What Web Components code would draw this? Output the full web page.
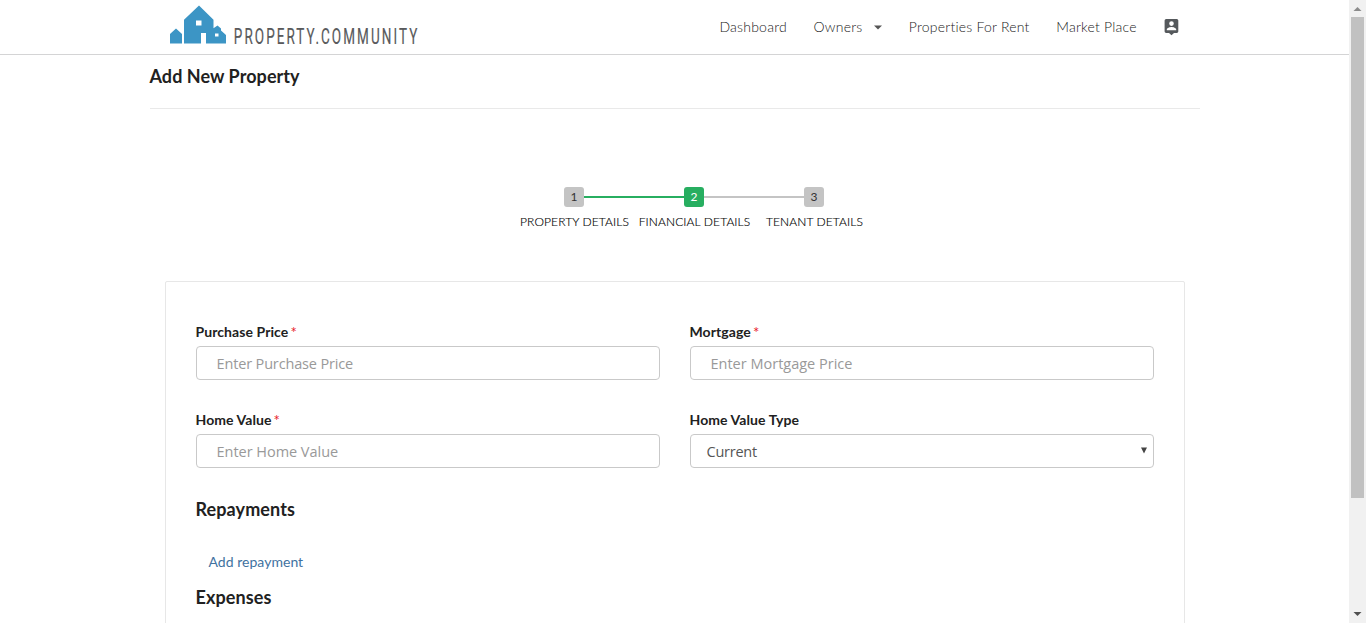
<!DOCTYPE html>
<html lang="en">
<head>
<meta charset="utf-8">
<title>Add New Property</title>
<style>
html,body{margin:0;height:100%;overflow:hidden;background:#fff}
body{font-family:Lato,sans-serif;font-size:14px;color:#212121}
</style>
</head>
<body>
<app-shell>
  <site-header slot="header">
    <nav-item>Dashboard</nav-item>
    <nav-item caret>Owners</nav-item>
    <nav-item>Properties For Rent</nav-item>
    <nav-item>Market Place</nav-item>
  </site-header>
  <page-title>Add New Property</page-title>
  <step-bar>
    <step-item number="1" line="#27ae60">PROPERTY DETAILS</step-item>
    <step-item number="2" line="#c4c4c4" active>FINANCIAL DETAILS</step-item>
    <step-item number="3">TENANT DETAILS</step-item>
  </step-bar>
  <form-panel>
    <form-grid>
      <text-field label="Purchase Price" required hint="Enter Purchase Price" style="--track:-.15px"></text-field>
      <text-field label="Mortgage" required hint="Enter Mortgage Price"></text-field>
      <text-field label="Home Value" required hint="Enter Home Value" style="--track:-.03px"></text-field>
      <select-field label="Home Value Type" value="Current" style="--track:-.25px"></select-field>
    </form-grid>
    <form-section heading="Repayments"><add-link>Add repayment</add-link></form-section>
    <form-section heading="Expenses"></form-section>
  </form-panel>
</app-shell>
<script>
const define = (name, render) => customElements.define(name, class extends HTMLElement {
  connectedCallback() {
    if (this.shadowRoot) return;
    this.attachShadow({mode: 'open'}).innerHTML = render(this);
  }
});
const attr = (el, n) => el.getAttribute(n) || '';

define('app-shell', () => `
<style>
:host{display:grid;grid-template-columns:minmax(0,1fr) 17px;height:100vh;overflow:hidden}
.page{overflow:hidden;min-width:0;height:100vh}
main{width:1050px;margin:0 auto}
</style>
<div class="page"><slot name="header"></slot><main><slot></slot></main></div>
<scroll-rail></scroll-rail>`);

define('scroll-rail', () => `
<style>
:host{display:flex;flex-direction:column;background:#f1f1f1;align-items:center}
svg{display:block;width:17px;height:17px;flex:none}
.thumb{width:13px;height:481px;background:#c1c1c1}
.rest{flex:1}
</style>
<svg viewBox="0 0 17 17"><path d="M4.5 11h8l-4-4z" fill="#8b8b8b"/></svg>
<div class="thumb"></div><div class="rest"></div>
<svg viewBox="0 0 17 17"><path d="M4.5 6h8l-4 4z" fill="#505050"/></svg>`);

define('site-header', () => `
<style>
:host{display:flex;height:54px;border-bottom:1px solid #d4d4d5;padding:0 170.500px 0 169px;justify-content:space-between;align-items:center}
nav{display:flex;align-items:center;height:54px}
</style>
<brand-logo></brand-logo>
<nav><slot></slot><account-icon></account-icon></nav>`);

define('brand-logo', () => `
<style>
:host{display:block;height:54px}
svg{display:block}
text{font-family:Roboto,sans-serif;font-weight:400;font-size:22.5px;fill:#58595b;stroke:#58595b;stroke-width:.2px}
</style>
<svg width="252" height="54" viewBox="0 0 252 54">
<path fill="#3c95c5" fill-rule="evenodd" d="M1 43.5V34l6-5.5 6 5.5v9.5zM15 43.5V19.800L30 5.500l14.500 14.300v8.500l4-2.800 3.500 3v2l5 4.500v8.500H37V33h-5v10.500zM27 20.500v5h5.500v-5zM46 33.500v3h3.500v-3z"/>
<text transform="translate(64.800 43.600) scale(.6 1)" textLength="306" lengthAdjust="spacing">PROPERTY.COMMUNITY</text>
</svg>`);

define('nav-item', el => `
<style>
:host{display:flex;align-items:center;margin-right:26.700px;font-size:14px;line-height:20px;font-weight:300;color:#222;white-space:nowrap;letter-spacing:.22px}
svg{margin-left:11.600px;display:block}
</style>
<span><slot></slot></span>${el.hasAttribute('caret') ? '<svg width="8" height="5" viewBox="0 0 8 5"><path d="M0 .5h8L4 4.500z" fill="#555"/></svg>' : ''}`);

define('account-icon', () => `
<style>:host{display:block;width:15px;height:54px}svg{display:block;margin-top:18px}</style>
<svg width="16" height="18" viewBox="0 0 16 18"><path fill="#55595c" fill-rule="evenodd" d="M2.200 1h10.600q1.500 0 1.500 1.500v11q0 1.400-1.500 1.400H10L7.500 17.300 5 14.900H2.200Q.600 14.900.600 13.500v-11Q.600 1 2.200 1zM7.500 3.300a2.300 2.300 0 1 0 0 4.600 2.300 2.300 0 0 0 0-4.600zM12.200 12.200v-.700c0-1.600-3.100-2.500-4.700-2.500s-4.700.900-4.700 2.500v.700z"/></svg>`);

define('page-title', () => `
<style>
:host{display:block;height:53px;border-bottom:1px solid #e9e9e9}
h1{margin:0;padding-top:10px;font-size:18px;line-height:23px;font-weight:700;color:#212121;letter-spacing:.06px}
</style><h1><slot></slot></h1>`);

define('step-bar', () => `
<style>:host{display:flex;justify-content:center;padding:78px 0 0 38px;height:94px}</style><slot></slot>`);

define('step-item', el => `
<style>
:host{display:grid;width:120px;grid-template-columns:50px 20px 50px;grid-template-rows:20px 30px;align-items:center}
.l{height:2px}
b{height:20px;box-sizing:border-box;padding-left:1px;border-radius:3px;background:#c4c4c4;color:#333;font-weight:400;font-size:12px;line-height:20px;text-align:center}
:host([active]) b{background:#27ae60;color:#fff}
span{grid-column:1/4;text-align:center;font-size:12px;color:#000;font-weight:300;white-space:nowrap;line-height:20px;letter-spacing:.12px;padding-left:2px;-webkit-text-stroke:.15px #000}
</style>
<i class="l" style="background:${el.previousElementSibling ? attr(el.previousElementSibling, 'line') : 'none'}"></i><b>${attr(el, 'number')}</b><i class="l" style="background:${attr(el, 'line') || 'none'}"></i>
<span><slot></slot></span>`);

define('form-panel', () => `
<style>:host{display:block;box-sizing:border-box;width:1020px;height:500px;margin:0 15px;border:1px solid #e7e7e7;border-radius:2px;padding:41px 30px 0}</style><slot></slot>`);

define('form-grid', () => `
<style>:host{display:grid;grid-template-columns:464px 464px;column-gap:30px;row-gap:32px}</style><slot></slot>`);

const fieldStyle = `
:host{display:block;height:56px}
label{display:block;font-size:14px;line-height:18px;font-weight:700;color:#212121;height:22px;white-space:nowrap;letter-spacing:.08px}
em{font-style:normal;font-weight:400;color:#e8202a;margin-left:2px;font-size:15px;line-height:1;position:relative;top:1px}
input,select{display:block;box-sizing:border-box;width:464px;height:34px;margin:1px 0 0;border:1px solid #c9c9c9;border-radius:4px;background:#fff;font:14.500px "Open Sans",sans-serif;letter-spacing:var(--track,0);color:#555;outline:0;appearance:none}
input{padding:0 20px}
input::placeholder{color:#999;opacity:1}
select{padding:0 16px}`;

define('text-field', el => `
<style>${fieldStyle}</style>
<label for="f">${attr(el, 'label')}${el.hasAttribute('required') ? '<em>*</em>' : ''}</label>
<input id="f" type="text" placeholder="${attr(el, 'hint')}">`);

define('select-field', el => `
<style>${fieldStyle}
.box{display:grid;align-items:center}
.box>*{grid-area:1/1}
svg{justify-self:end;margin-right:6px;pointer-events:none}</style>
<label for="f">${attr(el, 'label')}</label>
<div class="box"><select id="f"><option>${attr(el, 'value')}</option></select>
<svg width="7" height="7" viewBox="0 0 7 7"><path d="M0 .500h6l-3 6z" fill="#444"/></svg></div>`);

define('form-section', el => `
<style>
:host{display:block;height:88px}
:host(:first-of-type){margin-top:31px}
h2{margin:0;font-size:18px;line-height:23px;font-weight:700;color:#212121;letter-spacing:.1px}
</style><h2>${attr(el, 'heading')}</h2><slot></slot>`);

define('add-link', () => `
<style>:host{display:block;padding:31px 0 0 13px;line-height:20px}a{color:#41729f;font-size:14px;text-decoration:none;cursor:pointer;letter-spacing:.03px}</style><a><slot></slot></a>`);
</script>
</body>
</html>
